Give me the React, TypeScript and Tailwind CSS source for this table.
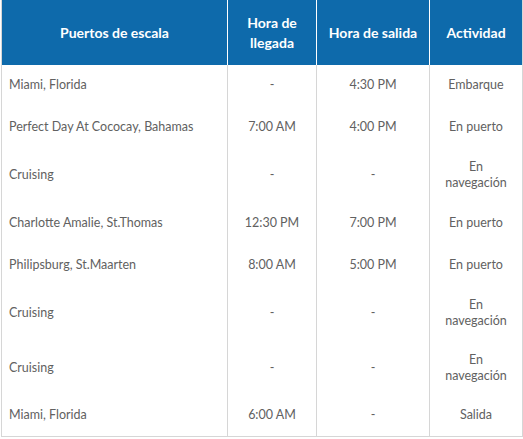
const rows = [
  { port: "Miami, Florida", arr: "-", dep: "4:30 PM", act: "Embarque", h: "h-[40px]" },
  { port: "Perfect Day At Cococay, Bahamas", arr: "7:00 AM", dep: "4:00 PM", act: "En puerto", h: "h-[44px]" },
  { port: "Cruising", arr: "-", dep: "-", act: "En navegación", h: "h-[52px]" },
  { port: "Charlotte Amalie, St.Thomas", arr: "12:30 PM", dep: "7:00 PM", act: "En puerto", h: "h-[44px]" },
  { port: "Philipsburg, St.Maarten", arr: "8:00 AM", dep: "5:00 PM", act: "En puerto", h: "h-[40px]" },
  { port: "Cruising", arr: "-", dep: "-", act: "En navegación", h: "h-[56px]" },
  { port: "Cruising", arr: "-", dep: "-", act: "En navegación", h: "h-[54px]" },
  { port: "Miami, Florida", arr: "6:00 AM", dep: "-", act: "Salida", h: "h-[41px]" },
];

export default function App() {
  return (
    <div className="w-[523px] h-[439px] bg-white" style={{ fontFamily: "Lato, 'Open Sans', sans-serif" }}>
      <table className="ml-px w-[521px] table-fixed border-collapse">
        <colgroup>
          <col className="w-[226px]" />
          <col className="w-[89px]" />
          <col className="w-[113px]" />
          <col className="w-[93px]" />
        </colgroup>
        <thead>
          {/* header row */}
          <tr className="h-[65px] bg-[#0e6aab] text-white text-[14px] font-bold leading-5">
            <th className="border-l border-l-[#d6d6d6] border-r border-r-white px-2 font-bold">Puertos de escala</th>
            <th className="border-x border-white px-2 font-bold">Hora de llegada</th>
            <th className="border-x border-white px-2 font-bold">Hora de salida</th>
            <th className="border-l border-l-white border-r border-r-[#d6d6d6] px-2 font-bold">Actividad</th>
          </tr>
        </thead>
        <tbody className="text-[12.5px] leading-4 text-[#616161]">
          {rows.map((r, i) => (
            <tr key={i} className={r.h}>
              <td className={`border-x border-[#d6d6d6] pl-[7px] pr-2 ${i === rows.length - 1 ? "border-b" : ""}`}>{r.port}</td>
              <td className={`border-x border-[#d6d6d6] px-2 text-center ${i === rows.length - 1 ? "border-b" : ""}`}>{r.arr}</td>
              <td className={`border-x border-[#d6d6d6] px-2 text-center ${i === rows.length - 1 ? "border-b" : ""}`}>{r.dep}</td>
              <td className={`border-x border-[#d6d6d6] px-2 text-center ${i === rows.length - 1 ? "border-b" : ""}`}>{r.act}</td>
            </tr>
          ))}
        </tbody>
      </table>
    </div>
  );
}
